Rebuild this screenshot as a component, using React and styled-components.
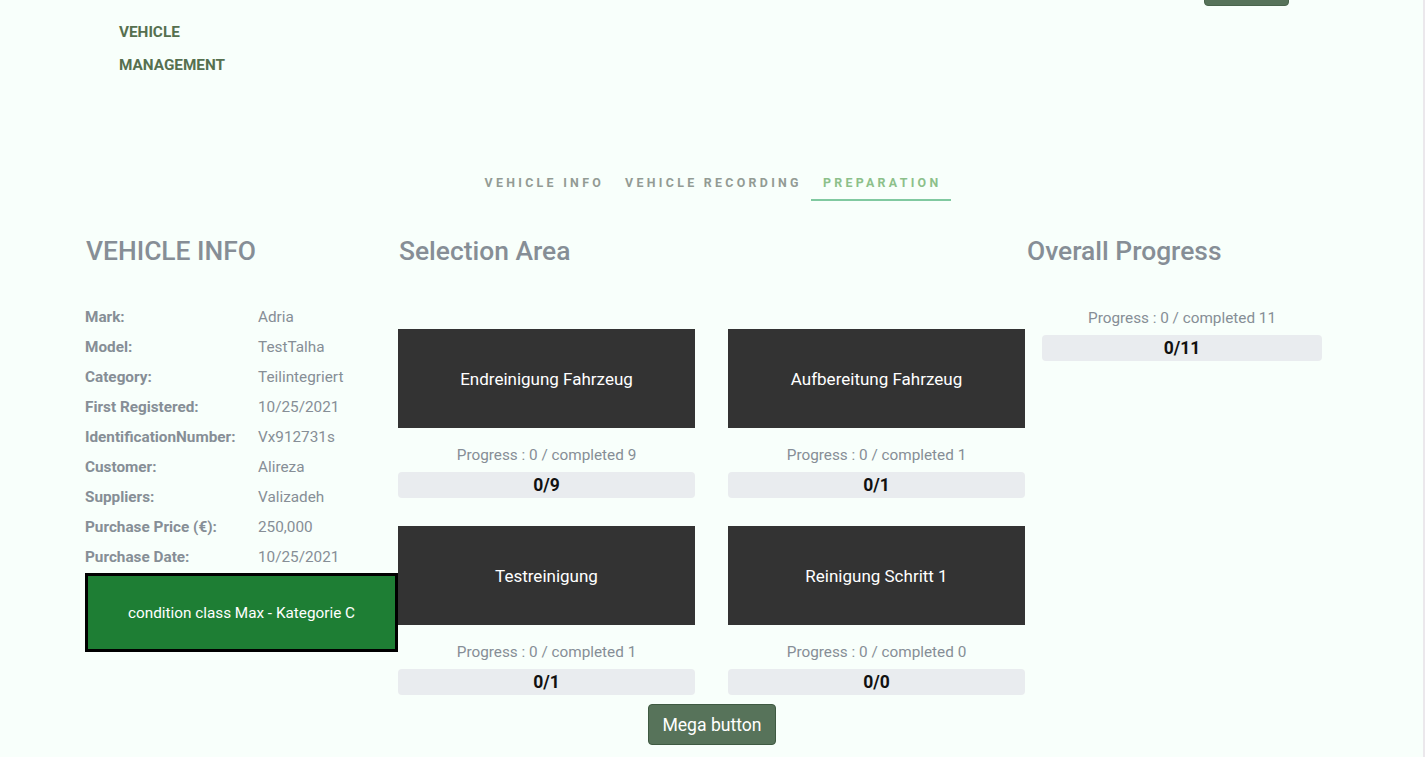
import React from "react"
import styled, { createGlobalStyle } from "styled-components"

const GlobalStyle = createGlobalStyle`
  * { box-sizing: border-box; }
  body {
    margin: 0;
    background: #f8fffb;
    font-family: Roboto, "Liberation Sans", Arial, sans-serif;
  }
  #root {
    min-height: 100vh;
    border-right: 2px solid #ebe8ec;
  }
`

const vehicle = [
  ["Mark:", "Adria"],
  ["Model:", "TestTalha"],
  ["Category:", "Teilintegriert"],
  ["First Registered:", "10/25/2021"],
  ["IdentificationNumber:", "Vx912731s"],
  ["Customer:", "Alireza"],
  ["Suppliers:", "Valizadeh"],
  ["Purchase Price (€):", "250,000"],
  ["Purchase Date:", "10/25/2021"],
]

const steps = [
  { name: "Endreinigung Fahrzeug", done: 0, total: 9 },
  { name: "Aufbereitung Fahrzeug", done: 0, total: 1 },
  { name: "Testreinigung", done: 0, total: 1 },
  { name: "Reinigung Schritt 1", done: 0, total: 0 },
]

const tabs = ["VEHICLE INFO", "VEHICLE RECORDING", "PREPARATION"]

const App = () => {
  return (
    <Page>
      <GlobalStyle />

      <Header>
        <Brand>
          <span>VEHICLE</span>
          <span>MANAGEMENT</span>
        </Brand>
        <TopButton />
      </Header>

      <Tabs>
        {tabs.map((t) => (
          <Tab key={t} active={t === "PREPARATION"}>{t}</Tab>
        ))}
      </Tabs>

      <Content>
        <Column>
          <Heading>VEHICLE INFO</Heading>
          <InfoTable>
            {vehicle.map(([label, value]) => (
              <InfoRow key={label}>
                <b>{label}</b>
                <span>{value}</span>
              </InfoRow>
            ))}
          </InfoTable>
          <Condition>condition class Max - Kategorie C</Condition>
        </Column>

        <Column>
          <Heading>Selection Area</Heading>
          <Cards>
            {steps.map((s) => (
              <Step key={s.name}>
                <Card>{s.name}</Card>
                <ProgressLabel>Progress : {s.done} / completed {s.total}</ProgressLabel>
                <Bar>{s.done}/{s.total}</Bar>
              </Step>
            ))}
          </Cards>
          <MegaButton>Mega button</MegaButton>
        </Column>

        <Column>
          <Heading>Overall Progress</Heading>
          <Overall>
            <ProgressLabel>Progress : 0 / completed 11</ProgressLabel>
            <Bar>0/11</Bar>
          </Overall>
        </Column>
      </Content>
    </Page>
  )
}

export default App

const Page = styled.div`
  display: flex;
  flex-direction: column;
`

const Header = styled.header`
  display: flex;
  justify-content: space-between;
  align-items: flex-start;
  padding: 0 134px 0 119px;
  height: 165px;
`

const Brand = styled.div`
  display: flex;
  flex-direction: column;
  padding-top: 16px;

  span {
    font-size: 15.3px;
    font-weight: 700;
    line-height: 33px;
    color: #56704f;
  }
`

const TopButton = styled.button`
  width: 85px;
  height: 38px;
  margin-top: -32px;
  background: #57735a;
  border: 1px solid #4a654d;
  border-radius: 4px;
`

const Tabs = styled.nav`
  display: flex;
  justify-content: center;
`

const Tab = styled.div`
  padding: 10px 9px 8px 12px;
  font-size: 12.4px;
  font-weight: 700;
  line-height: 16px;
  letter-spacing: 3.3px;
  color: ${(p) => (p.active ? "#8cc08a" : "#939b94")};
  border-bottom: 2px solid ${(p) => (p.active ? "#80c9a0" : "transparent")};
`

const Content = styled.main`
  display: grid;
  grid-template-columns: 313px 628px 312px;
  padding: 35px 0 0 85px;
`

const Column = styled.section`
  display: flex;
  flex-direction: column;
`

const Heading = styled.h2`
  margin: 0;
  font-size: 26.4px;
  font-weight: 500;
  line-height: 30px;
  color: #868e96;
  padding-left: 1px;
`

const InfoTable = styled.div`
  margin-top: 36px;
  display: flex;
  flex-direction: column;
`

const InfoRow = styled.div`
  display: grid;
  grid-template-columns: 173px 1fr;
  font-size: 15.3px;
  line-height: 30px;
  color: #868e96;

  b {
    font-weight: 700;
  }
`

const Condition = styled.div`
  margin-top: 1px;
  height: 79px;
  display: flex;
  align-items: center;
  justify-content: center;
  background: #1e7e34;
  border: 3px solid #000;
  color: #fff;
  font-size: 15.3px;
`

const Cards = styled.div`
  margin-top: 63px;
  display: grid;
  grid-template-columns: 297px 297px;
  column-gap: 33px;
  row-gap: 28px;
`

const Step = styled.div`
  display: flex;
  flex-direction: column;
`

const Card = styled.div`
  height: 99px;
  display: flex;
  align-items: center;
  justify-content: center;
  background: #333;
  color: #fff;
  font-size: 17px;
`

const ProgressLabel = styled.div`
  margin-top: 17px;
  text-align: center;
  font-size: 15.3px;
  line-height: 21px;
  color: #868e96;
`

const Bar = styled.div`
  margin-top: 6px;
  height: 26px;
  border-radius: 4px;
  background: #e9ecef;
  text-align: center;
  font-size: 17.5px;
  font-weight: 700;
  line-height: 26px;
  color: #111;
`

const Overall = styled.div`
  margin: 25px 16px 0;
  display: flex;
  flex-direction: column;
`

const MegaButton = styled.button`
  align-self: center;
  margin-top: 9px;
  padding: 0 13px;
  height: 41px;
  background: #57735a;
  border: 1px solid #3f5a42;
  border-radius: 4px;
  color: #fff;
  font-family: inherit;
  font-size: 17.6px;
`
